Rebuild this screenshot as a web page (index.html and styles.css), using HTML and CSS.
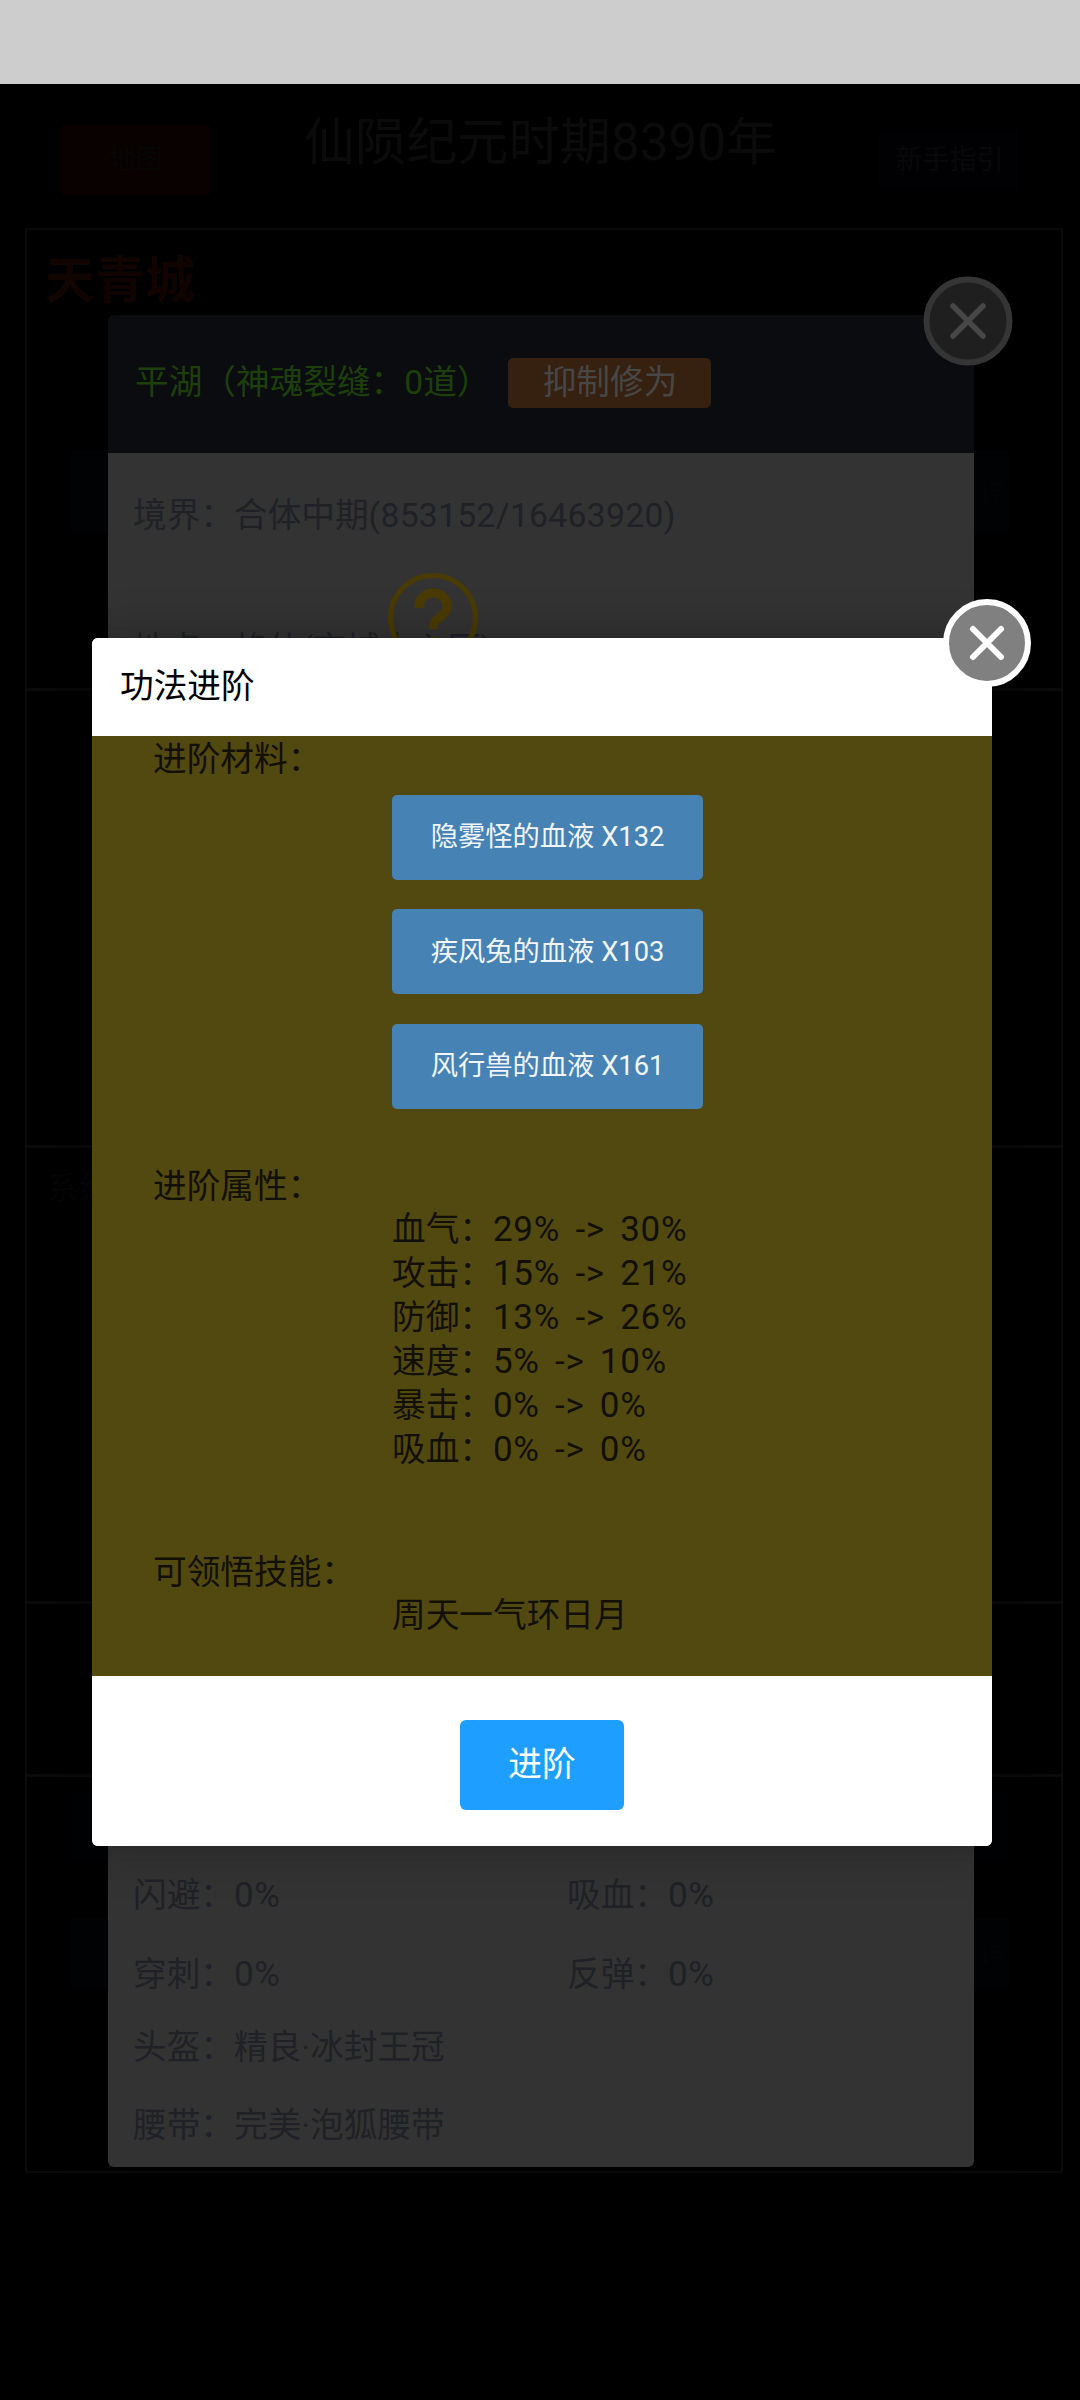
FILE: index.html
```
<!DOCTYPE html>
<html lang="zh-CN">
<head>
<meta charset="utf-8">
<title>功法进阶</title>
<link rel="stylesheet" href="styles.css">
</head>
<body>
<div class="status-bar"></div>
<header class="top-bar">
  <div class="map-btn">地图</div>
  <div class="era-title">仙陨纪元时期8390年</div>
  <div class="guide-btn">新手指引</div>
</header>
<main class="world">
  <section class="world-sec sec-city">
    <h2 class="city-name">天青城</h2>
    <div class="teal-bar"><span class="teal-link">详</span></div>
  </section>
  <section class="world-sec sec-b"></section>
  <section class="world-sec sec-c"><div class="sys-label">系统</div></section>
  <section class="world-sec sec-d"></section>
  <section class="world-sec sec-e">
    <div class="teal-bar teal-e1"></div>
    <div class="teal-bar teal-e2"><span class="teal-link">详</span></div>
  </section>
</main>

<div class="char-panel">
  <div class="char-head">
    <span class="char-name">平湖（神魂裂缝：0道）</span>
    <span class="suppress-btn">抑制修为</span>
  </div>
  <div class="char-body">
    <div class="char-row">境界：合体中期<span class="num">(853152/16463920)</span></div>
    <div class="char-row row-second">地点：格仙(京城中心区)</div>
    <svg class="help-icon" viewBox="0 0 90 90" aria-hidden="true">
      <circle cx="45" cy="45" r="42.500" fill="none" stroke="#4a3b02" stroke-width="5"/>
      <path d="M31 35c0-10 6-15 14-15s14 5 14 13c0 6-4 9-8 12-4 2.500-6 5-6 11" fill="none" stroke="#4a3b02" stroke-width="9"/>
      <circle cx="45" cy="69" r="5.500" fill="#4a3b02"/>
    </svg>
    <div class="char-hidden"></div>
    <div class="char-grid">
      <div class="char-cell">闪避：<span class="pct">0%</span></div><div class="char-cell">吸血：<span class="pct">0%</span></div>
      <div class="char-cell">穿刺：<span class="pct">0%</span></div><div class="char-cell">反弹：<span class="pct">0%</span></div>
    </div>
    <div class="char-row row-helm">头盔：精良·冰封王冠</div>
    <div class="char-row row-belt">腰带：完美·泡狐腰带</div>
  </div>
  <svg class="close-back" viewBox="0 0 90 90" aria-hidden="true">
    <circle cx="45" cy="45" r="41.500" fill="#1f1f1f" stroke="#353535" stroke-width="6"/>
    <path d="M30 30 60 60M60 30 30 60" stroke="#474747" stroke-width="5.500" stroke-linecap="round"/>
  </svg>
</div>

<div class="dialog">
  <div class="dialog-head">功法进阶</div>
  <div class="dialog-body">
    <div class="label">进阶材料：</div>
    <div class="materials">
      <div class="material">隐雾怪的血液 X132</div>
      <div class="material">疾风兔的血液 X103</div>
      <div class="material">风行兽的血液 X161</div>
    </div>
    <div class="label label-attr">进阶属性：</div>
    <div class="values">
      <div class="value">血气：<span class="pct">29% -&gt; 30%</span></div>
      <div class="value">攻击：<span class="pct">15% -&gt; 21%</span></div>
      <div class="value">防御：<span class="pct">13% -&gt; 26%</span></div>
      <div class="value">速度：<span class="pct">5% -&gt; 10%</span></div>
      <div class="value">暴击：<span class="pct">0% -&gt; 0%</span></div>
      <div class="value">吸血：<span class="pct">0% -&gt; 0%</span></div>
    </div>
    <div class="label label-skill">可领悟技能：</div>
    <div class="values"><div class="value">周天一气环日月</div></div>
  </div>
  <div class="dialog-foot"><div class="advance-btn">进阶</div></div>
  <svg class="close-front" viewBox="0 0 90 90" aria-hidden="true">
    <circle cx="45" cy="45" r="41" fill="#808080" stroke="#fff" stroke-width="6"/>
    <path d="M31 31 59 59M59 31 31 59" stroke="#fff" stroke-width="6" stroke-linecap="round"/>
  </svg>
</div>
</body>
</html>
```
FILE: styles.css
```
* { box-sizing: border-box; }
html, body { margin: 0; padding: 0; }
body {
  width: 1080px;
  height: 2400px;
  overflow: hidden;
  position: relative;
  background: #000;
  font-family: Roboto, "Noto Sans CJK SC", sans-serif;
  font-size: 33.66px;
  line-height: 44px;
}
.num { letter-spacing: 0.300px; }
.pct { font-size: 35px; letter-spacing: 0.700px; word-spacing: 6px; }
.status-bar { height: 84px; background: #cdcdcd; }

.top-bar {
  height: 144px;
  padding: 0 58px 0 60px;
  display: flex;
  justify-content: space-between;
  align-items: flex-start;
  color: #0b0b0b;
}
.map-btn {
  width: 152px; height: 70px; margin-top: 41px;
  background: #090000; border-radius: 6px;
  display: flex; align-items: center; justify-content: center;
  font-size: 27px; color: #060606;
}
.era-title { margin: 28px 8px 0 0; font-size: 51.200px; line-height: 62px; }
.guide-btn {
  width: 145px; height: 60px; margin-top: 46px;
  background: #010104; border-radius: 6px;
  display: flex; align-items: center; justify-content: center;
  font-size: 27px; color: #080808;
}

.world { margin: 0 17px 0 25px; border: 2px solid #0a0a0a; }
.world-sec { border-bottom: 3px solid #0a0a0a; padding: 0 20px; }
.world-sec:last-child { border-bottom: 0; }
.sec-city { height: 461px; }
.sec-b { height: 457px; }
.sec-c { height: 456px; }
.sec-d { height: 173px; }
.sec-e { height: 380px; }
.city-name { margin: 0 0 0 -2px; padding-top: 21px; font-size: 50px; line-height: 60px; font-weight: 700; color: #120500; }
.sys-label { padding-top: 18px; font-size: 32px; color: #060606; }
.teal-bar {
  margin: 139px 32px 0 24px;
  height: 83px;
  background: #000304;
  display: flex; justify-content: flex-end; align-items: center;
}
.teal-link { font-size: 26px; color: #040606; margin-right: 4px; }
.teal-e1 { margin-top: 14px; height: 70px; }
.teal-e2 { margin-top: 57px; height: 71px; }

.char-panel {
  position: absolute;
  left: 108px; top: 315px;
  width: 866px; height: 1852px;
  border-radius: 6px;
  box-shadow: 1px 1px 50px rgba(0, 0, 0, .3);
}
.char-head {
  height: 138px;
  padding: 0 0 2px 27px;
  background: #0a0c10;
  display: flex; align-items: center;
  border-radius: 6px 6px 0 0;
}
.char-name { color: #1d400b; }
.suppress-btn {
  width: 203px; height: 50px; margin-left: 18px;
  background: #36200f; border-radius: 5px;
  display: flex; align-items: center; justify-content: center;
  color: #474747;
}
.char-body {
  position: relative;
  height: 1714px;
  padding: 41px 25px 0;
  background: #333;
  color: #1f2126;
  border-radius: 0 0 6px 6px;
}
.char-row { line-height: 44px; }
.row-second { margin-top: 90px; }
.help-icon { position: absolute; left: 280px; top: 120px; width: 90px; height: 90px; }
.char-hidden { height: 1202px; }
.char-grid { display: grid; grid-template-columns: 434px 1fr; grid-auto-rows: 44px; row-gap: 35px; }
.row-helm { margin-top: 29px; }
.row-belt { margin-top: 34px; }
.close-back { position: absolute; left: 815px; top: -39px; width: 90px; height: 90px; }

.dialog {
  position: absolute;
  left: 92px; top: 638px;
  width: 900px;
  border-radius: 6px;
  background: #fff;
  box-shadow: 1px 1px 50px rgba(0, 0, 0, .3);
}
.dialog-head {
  height: 98px;
  padding-left: 28px;
  display: flex; align-items: center;
  color: #000;
  background: #fff;
  border-radius: 6px 6px 0 0;
}
.dialog-body {
  height: 940px;
  padding: 2px 0 0 61px;
  background: #51490f;
  color: #120f05;
}
.label { line-height: 44px; }
.materials { display: flex; flex-direction: column; gap: 29.500px; margin: 12.500px 0 0 239px; }
.material {
  width: 311px; height: 85px;
  background: #4682b4; border-radius: 5px;
  display: flex; align-items: center; justify-content: center;
  font-size: 27.300px; color: #f2f6fa;
}
.label-attr { margin-top: 56px; }
.label-skill { margin-top: 79px; }
.values { margin: -1px 0 0 239px; }
.value { height: 44px; line-height: 44px; }
.dialog-foot {
  height: 170px;
  padding-top: 44px;
  display: flex; justify-content: center; align-items: flex-start;
  background: #fff;
  border-radius: 0 0 6px 6px;
}
.advance-btn {
  width: 164px; height: 90px;
  background: #1e9fff; border-radius: 6px;
  display: flex; align-items: center; justify-content: center;
  color: #fff;
}
.close-front { position: absolute; left: 850px; top: -40px; width: 90px; height: 90px; }
```
